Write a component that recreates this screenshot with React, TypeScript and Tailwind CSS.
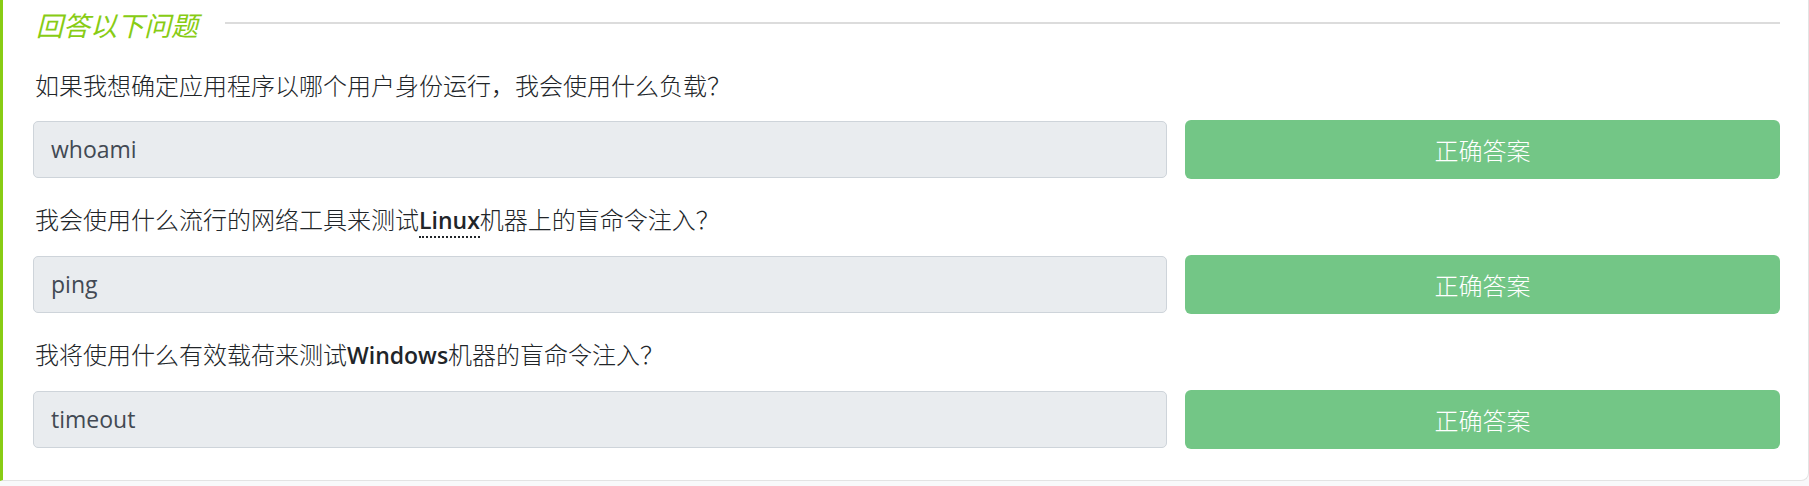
import React from "react";

const cjk = "font-['Noto_Sans_CJK_SC',sans-serif]";
const latin = "font-['Open_Sans','Noto_Sans_CJK_SC',sans-serif]";

type Question = {
  parts: React.ReactNode;
  answer: string;
};

const questions: Question[] = [
  {
    parts: <>如果我想确定应用程序以哪个用户身份运行，我会使用什么负载？</>,
    answer: "whoami",
  },
  {
    parts: (
      <>
        我会使用什么流行的网络工具来测试
        <abbr
          title="Linux"
          className={`${latin} font-semibold text-[23px] no-underline border-b-2 border-dotted border-[#212529]`}
        >
          Linux
        </abbr>
        机器上的盲命令注入？
      </>
    ),
    answer: "ping",
  },
  {
    parts: (
      <>
        我将使用什么有效载荷来测试
        <b className={`${latin} font-semibold text-[23px]`}>Windows</b>
        机器的盲命令注入？
      </>
    ),
    answer: "timeout",
  },
];

function QuestionRow({ q }: { q: Question }) {
  return (
    <div className="mb-[22px] last:mb-0">
      <div className={`${cjk} font-light text-[24px] leading-[36px] text-[#212529] mb-[17px] pl-[2px]`}>
        {q.parts}
      </div>
      <div className="flex items-center gap-[18px]">
        <div
          className={`${latin} flex-1 h-[57px] flex items-center px-[17px] bg-[#e9ecef] border border-[#ced4da] rounded-[5px] text-[23px] text-[#424953]`}
        >
          {q.answer}
        </div>
        <button
          disabled
          className={`${cjk} font-light w-[595px] h-[59px] bg-[#73c686] rounded-[6px] text-white text-[24px]`}
        >
          正确答案
        </button>
      </div>
    </div>
  );
}

export default function App() {
  return (
    <div className="w-full h-[486px] bg-[#f8f9fa]">
      <div className="h-[481px] bg-white border-l-[3px] border-l-[#88cc14] border-b border-r border-[#e3e3e3] rounded-br-[8px] pl-[30px] pr-[28px] pt-[7px]">
        <div className="flex items-center mb-[24px]">
          <h4 className={`${cjk} italic text-[27px] leading-[36px] text-[#88cc14] pl-[3px]`}>
            回答以下问题
          </h4>
          <div className="flex-1 ml-[27px] h-[2px] bg-[#dcdcdc] mt-[-4px]" />
        </div>
        {questions.map((q, i) => (
          <QuestionRow key={i} q={q} />
        ))}
      </div>
    </div>
  );
}
